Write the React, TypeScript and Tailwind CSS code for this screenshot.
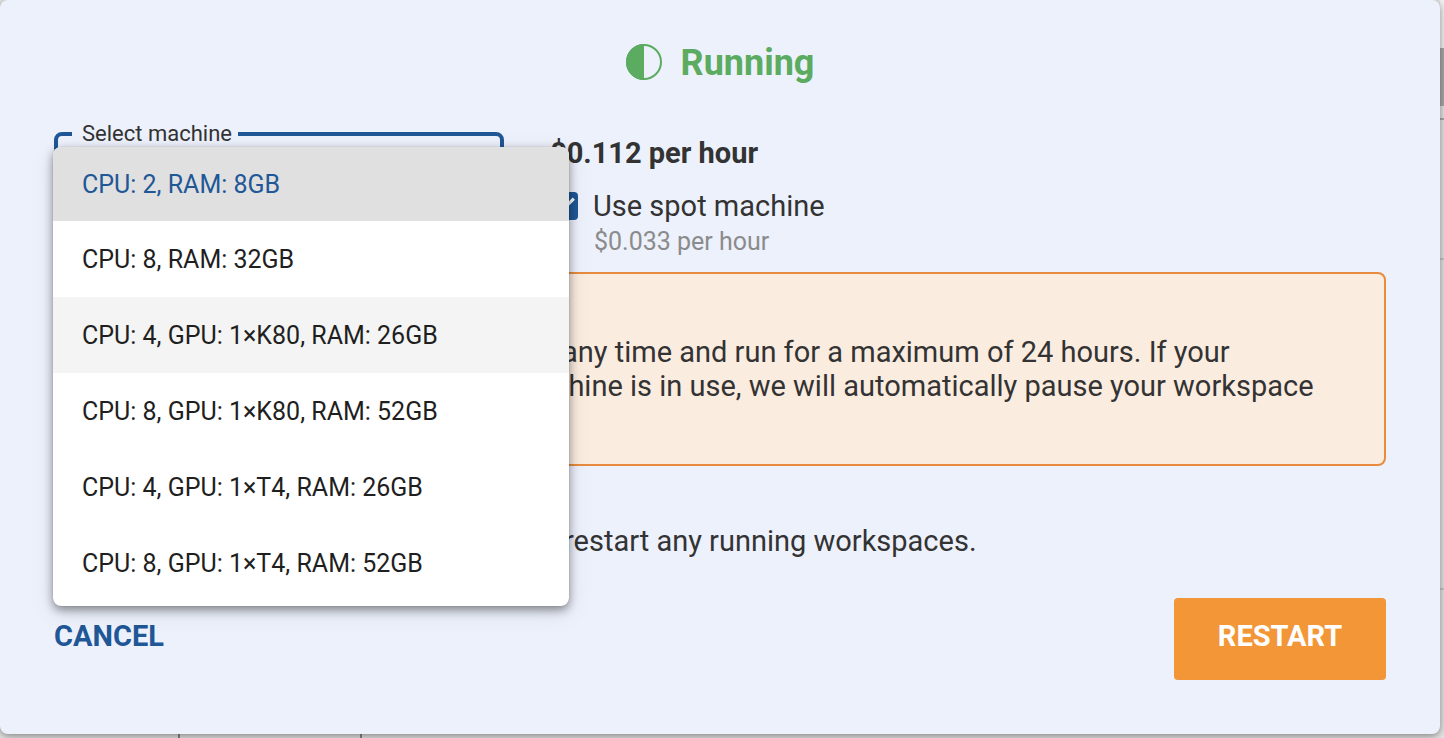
import { useState } from "react";
import clsx from "clsx";

const machines = [
  "CPU: 2, RAM: 8GB",
  "CPU: 8, RAM: 32GB",
  "CPU: 4, GPU: 1×K80, RAM: 26GB",
  "CPU: 8, GPU: 1×K80, RAM: 52GB",
  "CPU: 4, GPU: 1×T4, RAM: 26GB",
  "CPU: 8, GPU: 1×T4, RAM: 52GB",
];

function HalfCircle() {
  return (
    <svg viewBox="0 0 36 36" className="size-9 text-[#5bab60]" aria-hidden="true">
      <circle cx="18" cy="18" r="17" fill="none" stroke="currentColor" strokeWidth="2" />
      <path d="M18 0a18 18 0 0 0 0 36z" fill="currentColor" />
    </svg>
  );
}

function MachineSelect() {
  const [selected, setSelected] = useState(0);
  return (
    <div className="relative w-[450px]">
      <fieldset className="h-28 rounded-lg border-4 border-[#1f5797] px-[14px]">
        <legend id="machine-label" className="pr-[6px] pl-[10px] text-[22px] leading-6">
          Select machine
        </legend>
        <button
          type="button"
          aria-labelledby="machine-label"
          aria-haspopup="listbox"
          aria-expanded="true"
          className="block h-16 w-full"
        />
      </fieldset>
      <ul
        role="listbox"
        aria-labelledby="machine-label"
        className="absolute top-[25px] -left-px z-20 w-[516px] overflow-hidden rounded-lg bg-white pb-[5px] text-[25px] text-[#1f1f1f] shadow-[0_0_1px_rgba(0,0,0,0.3),0_4px_10px_rgba(0,0,0,0.4),0_6px_24px_rgba(0,0,0,0.1)]"
      >
        {machines.map((machine, i) => (
          <li
            key={machine}
            role="option"
            aria-selected={i === selected}
            onClick={() => setSelected(i)}
            className={clsx(
              "flex cursor-pointer items-center px-[29px] pt-[2px]",
              i === 0 ? "h-[74px]" : "h-[76px]",
              i === selected && "bg-[#e0e0e0] text-[#1f5797]",
              i === 2 && i !== selected && "bg-[#f4f4f4]",
            )}
          >
            {machine}
          </li>
        ))}
      </ul>
    </div>
  );
}

function Pricing() {
  const [spot, setSpot] = useState(true);
  return (
    <div className="pt-[15px]">
      <p className="text-[29px] leading-8 font-bold">$0.112 per hour</p>
      <div className="mt-[19px] flex items-center gap-[15px]">
        <span className="relative size-7">
          <input
            id="spot"
            type="checkbox"
            checked={spot}
            onChange={(e) => setSpot(e.target.checked)}
            className="block size-7 appearance-none rounded-sm border-2 border-[#1f5797] checked:bg-[#1f5797]"
          />
          {spot && (
            <svg viewBox="3 3 18 18" className="pointer-events-none absolute inset-0 size-7" aria-hidden="true">
              <path d="M10 17l-5-5 1.41-1.41L10 14.17l7.59-7.59L19 8z" fill="#fff" />
            </svg>
          )}
        </span>
        <label htmlFor="spot" className="text-[29px] leading-9">
          Use spot machine
        </label>
      </div>
      <p className="mt-[2px] pl-11 text-[25px] leading-8 text-[#8b8b8b]">$0.033 per hour</p>
    </div>
  );
}

export default function App() {
  return (
    <div className="flex min-h-screen flex-col overflow-x-hidden bg-[#e6e6e6] font-[Roboto,sans-serif] text-[#333333]">
      <div className="flex">
        <main className="relative z-10 min-w-0 flex-1 rounded-lg bg-[#edf1fc] px-[54px] pt-10 pb-[54px] shadow-[0_2px_8px_rgba(0,0,0,0.45)]">
          <h1 className="flex items-center justify-center gap-[19px] text-[36px] leading-[44px] font-bold text-[#5bab60]">
            <HalfCircle />
            <span className="pt-[3px] leading-[41px]">Running</span>
          </h1>
          <div className="mt-[38px] flex h-[150px] items-start gap-[46px]">
            <MachineSelect />
            <Pricing />
          </div>
          <section className="rounded-lg border-2 border-[#e88b3e] bg-[#fbece0] px-[26px] py-[61px] text-[29px] leading-[34px] whitespace-nowrap">
            <p className="pl-[480px]">any time and run for a maximum of 24 hours. If your</p>
            <p className="pl-[430px]">machine is in use, we will automatically pause your workspace</p>
          </section>
          <p className="mt-[58px] pl-[510px] text-[29px] leading-[34px] whitespace-nowrap">
            restart any running workspaces.
          </p>
          <div className="mt-10 flex items-start justify-between text-[29px] leading-8 font-bold">
            <button type="button" className="py-[22px] text-[#1f5797]">
              CANCEL
            </button>
            <button type="button" className="h-[82px] w-[212px] rounded-sm bg-[#f29637] pb-[6px] text-white">
              RESTART
            </button>
          </div>
        </main>
        <div className="flex w-1 flex-col" aria-hidden="true">
          <div className="h-12 bg-[#f4f4f4]" />
          <div className="h-[58px] bg-[#aaaaaa]" />
          <div className="h-[14px] border-b-2 border-[#aaaaaa]" />
          <div className="h-[140px] border-b-2 border-[#c9c9c9]" />
          <div className="h-[330px] border-b-2 border-[#c9c9c9]" />
        </div>
      </div>
      <div className="flex flex-1 pl-[178px]" aria-hidden="true">
        <div className="w-[184px] border-x-2 border-[#888888]" />
      </div>
    </div>
  );
}
